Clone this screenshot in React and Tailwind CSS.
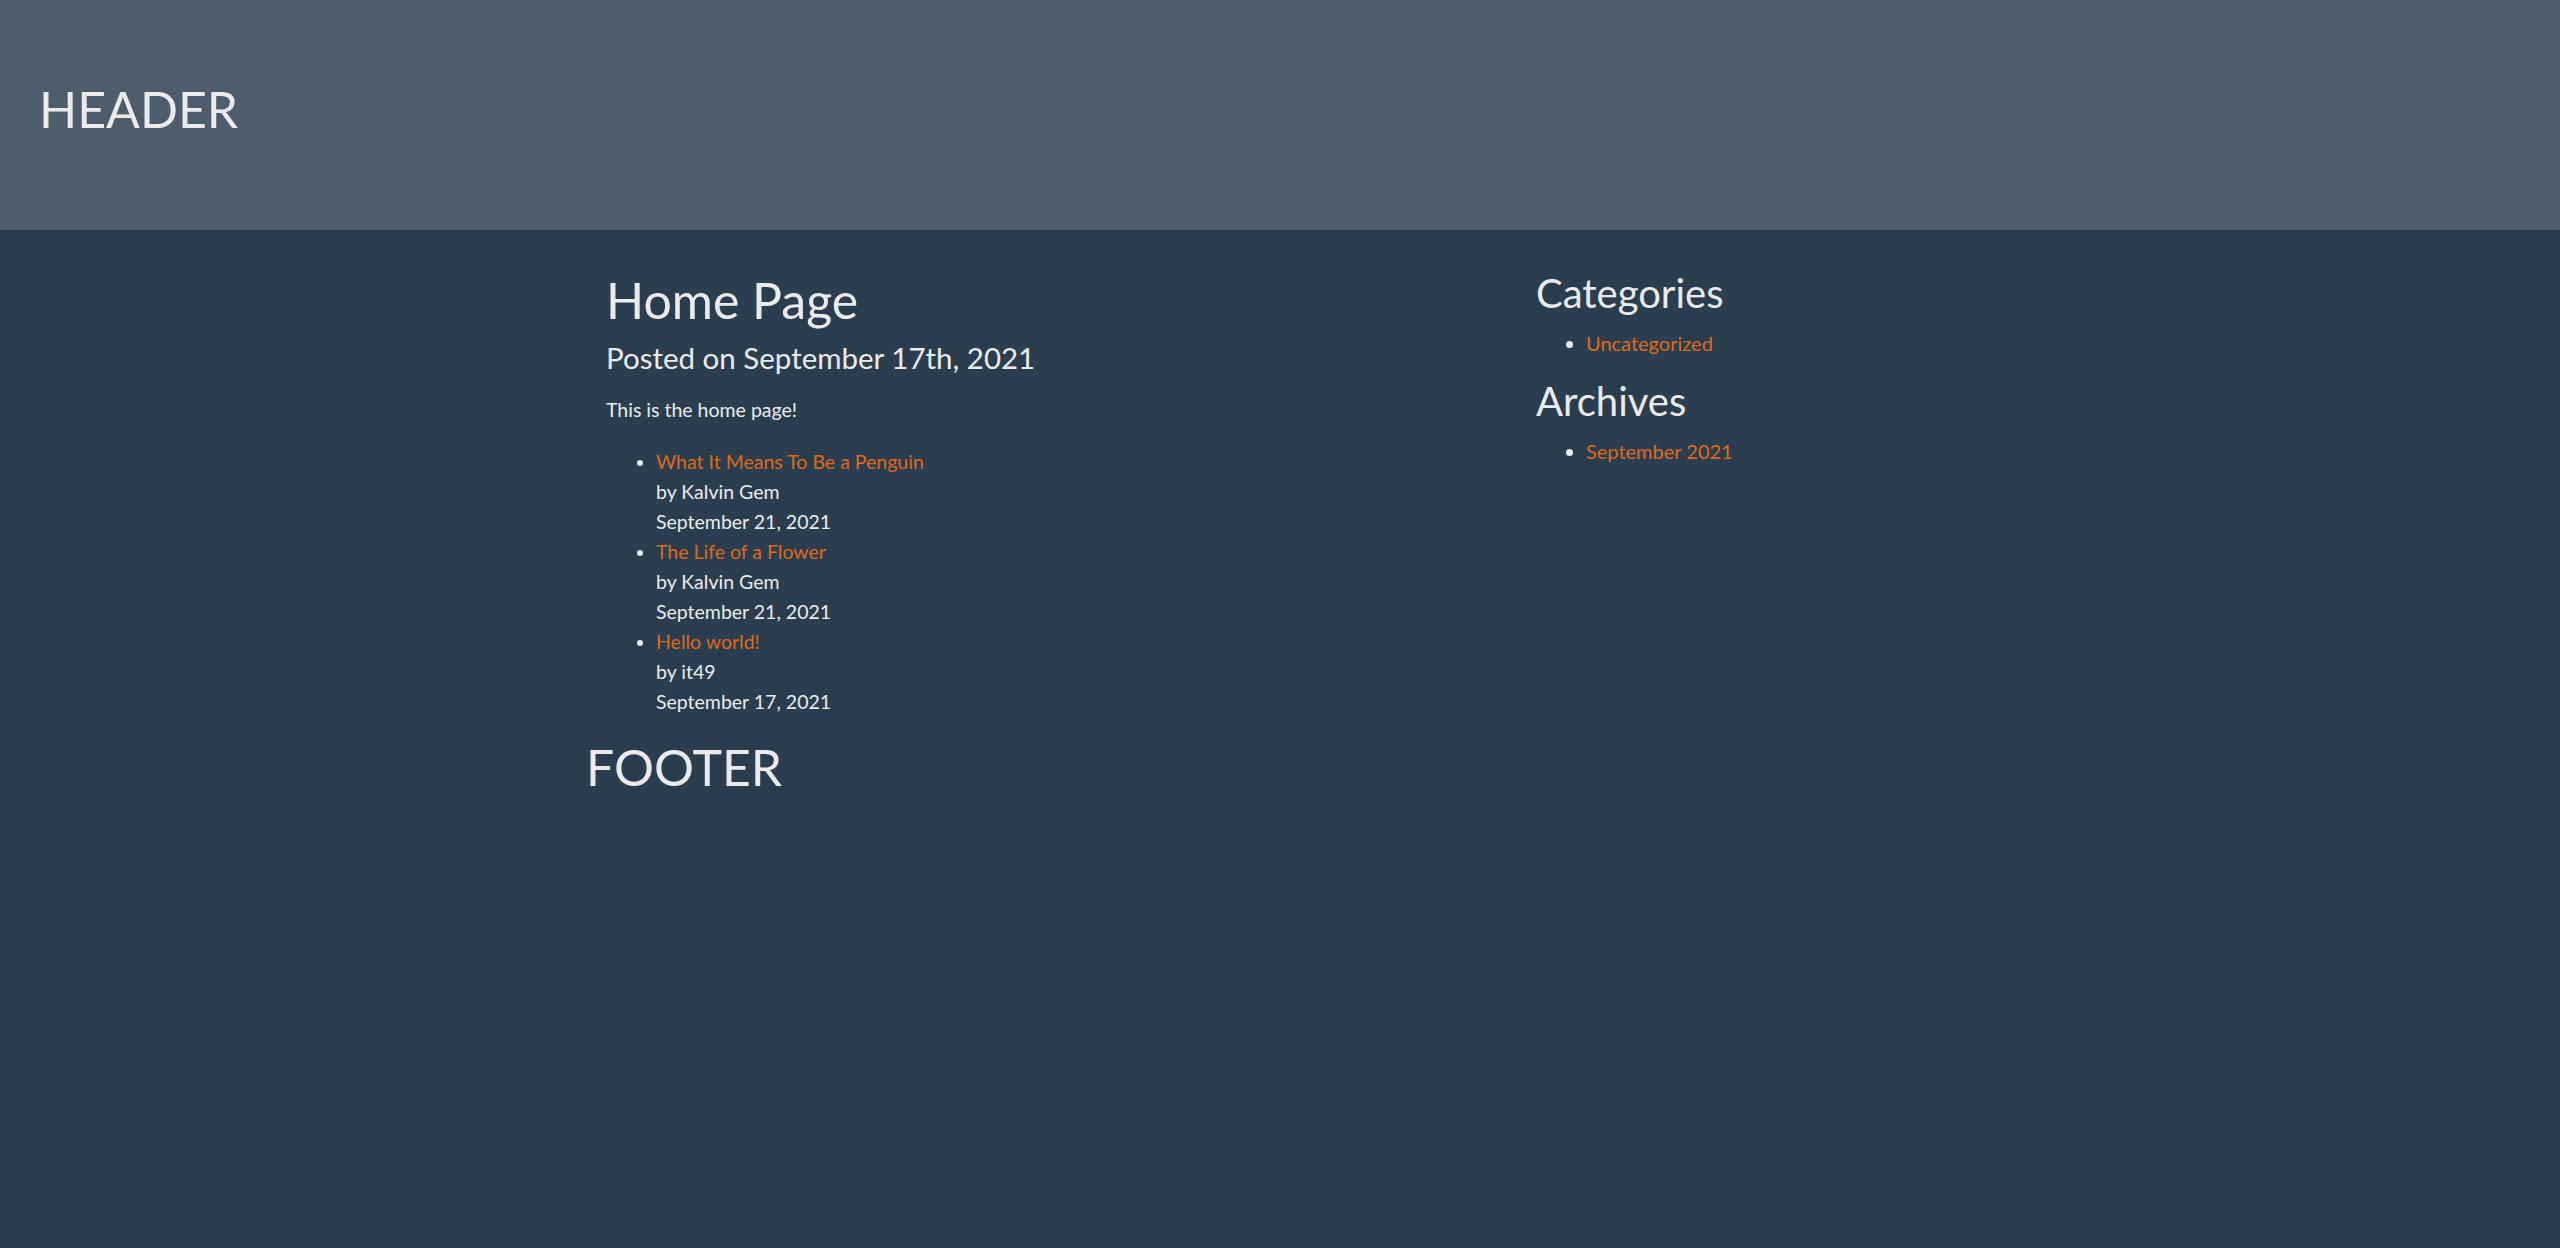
const posts = [
  { title: "What It Means To Be a Penguin", author: "Kalvin Gem", date: "September 21, 2021" },
  { title: "The Life of a Flower", author: "Kalvin Gem", date: "September 21, 2021" },
  { title: "Hello world!", author: "it49", date: "September 17, 2021" }
];

const App = () => {
  return (
    <div className="min-h-screen bg-[#2b3e50] font-['Lato','Open_Sans',sans-serif] text-[#ebebeb]">
      <header className="h-[230px] bg-[#4e5d6c] px-[39px] pt-[79px]">
        <h1 className="text-[50px] leading-[1.2]">HEADER</h1>
      </header>

      <div className="mx-auto w-[1390px] pt-[39px]">
        <div className="flex">
          <main className="w-[951px] pl-[21px] pt-px">
            <h1 className="text-[50px] leading-[1.2]">Home Page</h1>
            <h2 className="mt-[10px] text-[29.5px] leading-[1.2]">Posted on September 17th, 2021</h2>
            <p className="mt-[20px] text-[19.5px] leading-[30px]">This is the home page!</p>
            <ul className="mt-[22px] list-disc pl-[50px] text-[19.5px] leading-[30px]">
              {posts.map((post) => (
                <li key={post.title}>
                  <a href="#" className="text-[#df691a]">{post.title}</a>
                  <div>by {post.author}</div>
                  <div>{post.date}</div>
                </li>
              ))}
            </ul>
          </main>

          <aside className="flex-1">
            <h2 className="text-[40px] leading-[1.2]">Categories</h2>
            <ul className="mt-[11px] list-disc pl-[50px] text-[20px] leading-[30px]">
              <li><a href="#" className="text-[#df691a]">Uncategorized</a></li>
            </ul>
            <h2 className="mt-[19px] text-[40px] leading-[1.2]">Archives</h2>
            <ul className="mt-[11px] list-disc pl-[50px] text-[20px] leading-[30px]">
              <li><a href="#" className="text-[#df691a]">September 2021</a></li>
            </ul>
          </aside>
        </div>

        <footer className="mt-[20px] pl-px">
          <h2 className="text-[50px] leading-[1.2]">FOOTER</h2>
        </footer>
      </div>
    </div>
  );
};

export default App;
